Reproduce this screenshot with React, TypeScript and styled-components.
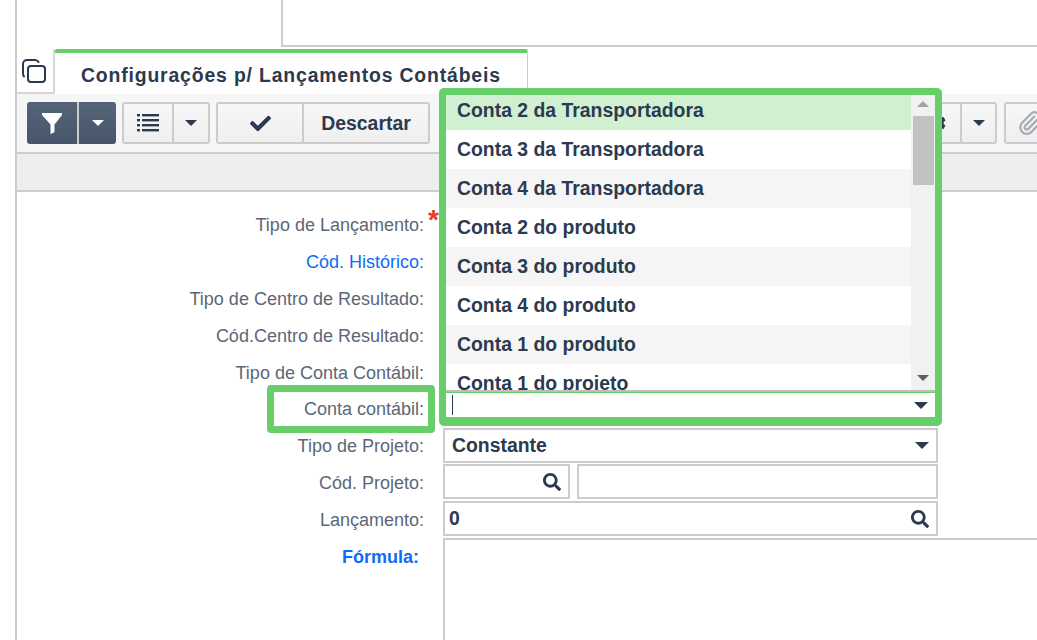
import React from "react";
import styled, { createGlobalStyle } from "styled-components";
import { FaCheck, FaSearch, FaCog } from "react-icons/fa";
import { Paperclip } from "lucide-react";

const ink = "#2c3a50";
const line = "#cccccc";
const green = "#66cf69";

const Global = createGlobalStyle`
  html, body { margin: 0; padding: 0; background: #fff; overflow: hidden; }
  * { box-sizing: border-box; }
  body { font-family: "Liberation Sans", Arial, sans-serif; color: ${ink}; }
`;

const Page = styled.div`
  position: relative;
  width: 1037px;
  height: 640px;
  overflow: hidden;
  padding-left: 15px;
  background: #fff;
`;
const Frame = styled.div`
  height: 640px;
  border-left: 2px solid ${line};
  display: flex;
  flex-direction: column;
`;
const TopArea = styled.div`
  height: 49px;
  flex: none;
  padding-left: 264px;
`;
const TopBox = styled.div`
  height: 47px;
  border-left: 2px solid ${line};
  border-bottom: 2px solid ${line};
`;
const TabBar = styled.div`
  height: 45px;
  flex: none;
  display: flex;
`;
const TabIconCell = styled.div`
  width: 38px;
  border-bottom: 2px solid #d6d6d6;
  border-right: 2px solid #d6d6d6;
  border-bottom-right-radius: 2px;
  padding: 10px 0 0 5px;
  svg { display: block; }
`;
const Tab = styled.div`
  width: 473px;
  border-top: 4px solid ${green};
  border-radius: 2px 2px 0 0;
  border-right: 1px solid ${line};
  font-size: 19.4px;
  font-weight: 700;
  letter-spacing: 0.84px;
  line-height: 44px;
  padding-left: 26px;
  white-space: nowrap;
`;
const Toolbar = styled.div`
  height: 58px;
  flex: none;
  background: #f6f6f6;
  display: flex;
  gap: 6px;
  padding: 8px 0 0 10px;
  overflow: hidden;
`;
const Group = styled.div<{ $dark?: boolean; $w: number; $push?: number }>`
  flex: none;
  width: ${(p) => p.$w}px;
  height: 42px;
  margin-left: ${(p) => p.$push ?? 0}px;
  display: flex;
  border-radius: 3px;
  border: ${(p) => (p.$dark ? "none" : `2px solid ${line}`)};
  background: ${(p) => (p.$dark ? "linear-gradient(#56647a, #47556a)" : "linear-gradient(#f7f7f7, #efefef)")};
  overflow: hidden;
`;
const ToolButton = styled.div<{ $w?: number; $dark?: boolean; $end?: boolean }>`
  flex: ${(p) => (p.$w ? "none" : "1")};
  width: ${(p) => (p.$w ? `${p.$w}px` : "auto")};
  display: flex;
  align-items: center;
  justify-content: ${(p) => (p.$end ? "flex-end" : "center")};
  padding-right: ${(p) => (p.$end ? "14px" : "0")};
  font-size: 19.4px;
  font-weight: 700;
  color: ${ink};
  & + & {
    border-left: ${(p) => (p.$dark ? "2px solid #45536a" : `2px solid ${line}`)};
  }
`;
const Caret = styled.span<{ $color?: string; $size?: number }>`
  display: block;
  width: 0;
  height: 0;
  border-left: ${(p) => p.$size ?? 6}px solid transparent;
  border-right: ${(p) => p.$size ?? 6}px solid transparent;
  border-top: ${(p) => p.$size ?? 6}px solid ${(p) => p.$color ?? ink};
`;
const Band = styled.div`
  height: 40px;
  flex: none;
  background: #eeeeee;
  border-top: 2px solid ${line};
  border-bottom: 2px solid ${line};
`;
const Form = styled.div`
  flex: 1;
  padding-top: 15px;
  display: grid;
  grid-template-columns: 407px 495px;
  grid-auto-rows: 36.8px;
  column-gap: 19px;
  align-items: center;
`;
const Label = styled.div<{ $tone?: "link" | "strong" }>`
  position: relative;
  justify-self: end;
  white-space: nowrap;
  font-size: 18px;
  line-height: 20px;
  color: ${(p) => (p.$tone ? "#0f6cf5" : "#5b6778")};
  font-weight: ${(p) => (p.$tone === "strong" ? 700 : 400)};
  margin-right: ${(p) => (p.$tone === "strong" ? "5px" : "0")};
`;
const Required = styled.span`
  position: absolute;
  left: calc(100% + 4px);
  top: -5px;
  color: #e0402a;
  font-size: 28px;
  font-weight: 700;
`;
const LabelMark = styled.div`
  position: absolute;
  left: -37px;
  right: -11px;
  top: -14px;
  bottom: -14px;
  border: 7px solid ${green};
  border-radius: 4px;
`;
const Fields = styled.div`
  display: flex;
  gap: 7px;
  height: 35px;
  margin-bottom: 2px;
`;
const Field = styled.div<{ $w?: number; $pad?: number }>`
  flex: ${(p) => (p.$w ? "none" : "1")};
  width: ${(p) => (p.$w ? `${p.$w}px` : "auto")};
  height: 35px;
  border: 2px solid ${line};
  background: #fff;
  display: flex;
  align-items: center;
  justify-content: space-between;
  padding: 0 7px 0 ${(p) => p.$pad ?? 7}px;
  font-size: 19.4px;
  font-weight: 700;
  color: ${ink};
`;
const Memo = styled.div`
  width: 640px;
  height: 120px;
  align-self: start;
  border: 2px solid ${line};
  background: #fff;
`;
const Dropdown = styled.div`
  position: absolute;
  left: 439px;
  top: 88px;
  width: 503px;
  height: 338px;
  border: 7px solid ${green};
  border-bottom-width: 9px;
  border-radius: 5px;
  background: #fff;
  display: flex;
  flex-direction: column;
  overflow: hidden;
`;
const ListArea = styled.div`
  height: 297px;
  flex: none;
  display: flex;
  overflow: hidden;
  border-bottom: 2px solid #bdbdbd;
`;
const List = styled.div`
  flex: 1;
  overflow: hidden;
`;
const Item = styled.div<{ $state: "on" | "odd" | "even" }>`
  height: 39px;
  padding-left: 11px;
  font-size: 19.4px;
  font-weight: 700;
  line-height: 39px;
  white-space: nowrap;
  color: ${ink};
  background: ${(p) => (p.$state === "on" ? "#d1f0d1" : p.$state === "odd" ? "#f5f5f5" : "#fff")};
  &:first-child {
    height: 35px;
    line-height: 31px;
  }
`;
const Scrollbar = styled.div`
  width: 24px;
  flex: none;
  background: #f1f1f1;
  display: flex;
  flex-direction: column;
  align-items: center;
  padding-top: 6px;
`;
const Thumb = styled.div`
  width: 21px;
  height: 69px;
  margin: 9px 0 190px;
  background: #c1c1c1;
`;
const CaretUp = styled.span`
  display: block;
  width: 0;
  height: 0;
  border-left: 6px solid transparent;
  border-right: 6px solid transparent;
  border-bottom: 6px solid #a3a3a3;
`;
const ComboInput = styled.div`
  flex: 1;
  border-top: 1px solid ${green};
  display: flex;
  align-items: center;
  justify-content: space-between;
  padding: 0 7px 0 6px;
`;
const TextCursor = styled.span`
  display: block;
  width: 1px;
  height: 20px;
  background: ${ink};
`;

const FunnelIcon = () => (
  <svg width="20" height="21" viewBox="0 0 20 21">
    <path d="M0 0h20v2L12.5 11.5V19L9 21H8.5V11.5L0 2z" fill="#fff" />
  </svg>
);
const ListIcon = () => (
  <svg width="22" height="18" viewBox="0 0 22 18" fill={ink}>
    <rect x="0" y="0" width="3" height="2.4" />
    <rect x="5" y="0" width="17" height="2.4" />
    <rect x="0" y="5" width="3" height="2.4" />
    <rect x="5" y="5" width="17" height="2.4" />
    <rect x="0" y="10" width="3" height="2.4" />
    <rect x="5" y="10" width="17" height="2.4" />
    <rect x="0" y="15" width="3" height="2.4" />
    <rect x="5" y="15" width="17" height="2.4" />
  </svg>
);
const CopyIcon = () => (
  <svg width="24" height="24" viewBox="0 0 24 24" fill="none" stroke={ink} strokeWidth="2">
    <rect x="6" y="7" width="17" height="16" rx="3" />
    <path d="M2 17.5C1 16.5 1 15 1 14V5a4 4 0 0 1 4-4h8c2 0 3 1 3.5 2" strokeLinecap="round" />
  </svg>
);

const items = [
  "Conta 2 da Transportadora",
  "Conta 3 da Transportadora",
  "Conta 4 da Transportadora",
  "Conta 2 do produto",
  "Conta 3 do produto",
  "Conta 4 do produto",
  "Conta 1 do produto",
  "Conta 1 do projeto",
];

export default function App() {
  return (
    <Page>
      <Global />
      <Frame>
        <TopArea>
          <TopBox />
        </TopArea>
        <TabBar>
          <TabIconCell>
            <CopyIcon />
          </TabIconCell>
          <Tab>Configurações p/ Lançamentos Contábeis</Tab>
        </TabBar>
        <Toolbar>
          <Group $dark $w={89}>
            <ToolButton $w={50} $dark>
              <FunnelIcon />
            </ToolButton>
            <ToolButton $dark>
              <Caret $color="#fff" />
            </ToolButton>
          </Group>
          <Group $w={88}>
            <ToolButton $w={48}>
              <ListIcon />
            </ToolButton>
            <ToolButton>
              <Caret />
            </ToolButton>
          </Group>
          <Group $w={214}>
            <ToolButton $w={84}>
              <FaCheck size={21} />
            </ToolButton>
            <ToolButton>Descartar</ToolButton>
          </Group>
          <Group $w={117} $push={444}>
            <ToolButton $w={78} $end>
              <FaCog size={18} />
            </ToolButton>
            <ToolButton>
              <Caret />
            </ToolButton>
          </Group>
          <Group $w={70} $push={1}>
            <ToolButton $w={48}>
              <Paperclip size={26} color="#a4abb5" />
            </ToolButton>
          </Group>
        </Toolbar>
        <Band />
        <Form>
          <Label>
            Tipo de Lançamento:<Required>*</Required>
          </Label>
          <Fields><Field /></Fields>
          <Label $tone="link">Cód. Histórico:</Label>
          <Fields><Field /></Fields>
          <Label>Tipo de Centro de Resultado:</Label>
          <Fields><Field /></Fields>
          <Label>Cód.Centro de Resultado:</Label>
          <Fields><Field /></Fields>
          <Label>Tipo de Conta Contábil:</Label>
          <Fields><Field /></Fields>
          <Label>
            Conta contábil:
            <LabelMark />
          </Label>
          <Fields><Field /></Fields>
          <Label>Tipo de Projeto:</Label>
          <Fields>
            <Field>
              Constante
              <Caret $size={7} />
            </Field>
          </Fields>
          <Label>Cód. Projeto:</Label>
          <Fields>
            <Field $w={127}>
              <span />
              <FaSearch size={18} />
            </Field>
            <Field />
          </Fields>
          <Label>Lançamento:</Label>
          <Fields>
            <Field $pad={4}>
              0
              <FaSearch size={18} />
            </Field>
          </Fields>
          <Label $tone="strong">Fórmula:</Label>
          <Memo />
        </Form>
      </Frame>
      <Dropdown>
        <ListArea>
          <List>
            {items.map((t, i) => (
              <Item key={t} $state={i === 0 ? "on" : i % 2 === 0 ? "odd" : "even"}>
                {t}
              </Item>
            ))}
          </List>
          <Scrollbar>
            <CaretUp />
            <Thumb />
            <Caret $color="#606060" />
          </Scrollbar>
        </ListArea>
        <ComboInput>
          <TextCursor />
          <Caret $size={7} />
        </ComboInput>
      </Dropdown>
    </Page>
  );
}
